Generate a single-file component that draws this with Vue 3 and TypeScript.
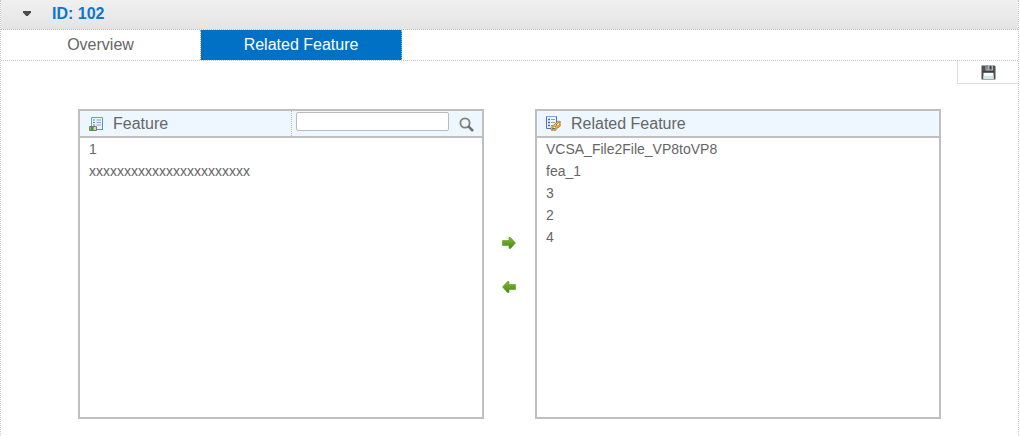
<script setup lang="ts">
import { ref } from 'vue'

const open = ref(true)
const tabs = ['Overview', 'Related Feature']
const active = ref('Related Feature')
const query = ref('')
const available = ref<string[]>(['1', 'xxxxxxxxxxxxxxxxxxxxxxx'])
const related = ref<string[]>(['VCSA_File2File_VP8toVP8', 'fea_1', '3', '2', '4'])
const selected = ref<string | null>(null)

function move(from: string[], to: string[]) {
  const index = from.findIndex((item) => item === selected.value)
  if (index >= 0) to.push(...from.splice(index, 1))
}
</script>

<template>
  <main class="page">
    <header class="title-bar">
      <button class="toggle" type="button" aria-label="Toggle details" :aria-expanded="open" @click="open = !open">
        <svg width="8" height="6" viewBox="0 0 8 6"><path d="M0 0h8v1.5L4.8 5H3.2L0 1.5z" fill="#4c4c4c" /></svg>
      </button>
      <h1>ID: 102</h1>
    </header>

    <nav class="tabs">
      <button
        v-for="tab in tabs"
        :key="tab"
        type="button"
        class="tab"
        :class="{ active: tab === active }"
        @click="active = tab"
      >{{ tab }}</button>
    </nav>

    <div class="toolbar">
      <button class="save" type="button" aria-label="Save">
        <svg width="15" height="15" viewBox="0 0 15 15">
          <path d="M0.5 0.5h13l1 1v13h-14z" fill="#505053" />
          <path d="M4.5 0.5h7.5v5H4.5z" fill="#b4b6bd" />
          <path d="M5 0.5h2v4H5z" fill="#85878e" />
          <path d="M8.5 1h2v3.5h-2z" fill="#3c3c40" />
          <path d="M2.5 7.5h10v6.5h-10z" fill="#f8fafa" />
          <path d="M2.5 11h10v3h-10z" fill="#d3e8e8" />
          <path d="M2 6.5h11v1H2z" fill="#2d2d30" />
        </svg>
      </button>
    </div>

    <div class="transfer">
      <section class="panel">
        <div class="panel-head">
          <svg class="icon" width="14" height="14" viewBox="0 0 14 14">
            <path d="M2.5 0.5h11v12h-11z" fill="#edf4ff" stroke="#6aa0e2" />
            <path d="M13.5 1v11.5H8" fill="none" stroke="#5a8fd0" />
            <path d="M4 3h2M4 5.5h2M4 8h2" stroke="#5382bd" stroke-width="1.2" />
            <path d="M7.5 3H12M7.5 5.5H12M7.5 8H12" stroke="#7fa4d4" />
            <path d="M0.5 9.5h7v4h-7z" fill="#d9d2c4" stroke="#807766" />
            <path d="M1.5 10h3v3h-3z" fill="#25a62e" />
          </svg>
          <h2>Feature</h2>
          <form class="search" @submit.prevent>
            <input v-model="query" type="text" aria-label="Search features">
            <button type="submit" aria-label="Search">
              <svg width="15" height="15" viewBox="0 0 15 15">
                <circle cx="6" cy="6" r="4.6" fill="none" stroke="#808080" stroke-width="1.8" />
                <path d="M9.2 9.2L14 14" stroke="#707070" stroke-width="2.6" />
              </svg>
            </button>
          </form>
        </div>
        <ul>
          <li v-for="item in available" :key="item" @click="selected = item">{{ item }}</li>
        </ul>
      </section>

      <div class="arrows">
        <button type="button" aria-label="Add to related features" @click="move(available, related)">
          <svg width="14" height="12" viewBox="0 0 14 12">
            <defs>
              <linearGradient id="leaf" x1="0" y1="0" x2="0" y2="1">
                <stop offset="0" stop-color="#83b83c" />
                <stop offset="1" stop-color="#438a0b" />
              </linearGradient>
            </defs>
            <path d="M0.5 3.5H7V0.5h1.5L13.5 6l-5 5.5H7V8.5H0.5z" fill="url(#leaf)" stroke="#5b961f" stroke-width="0.6" />
          </svg>
        </button>
        <button type="button" aria-label="Remove from related features" @click="move(related, available)">
          <svg width="14" height="12" viewBox="0 0 14 12">
            <path d="M13.5 3.5H7V0.5H5.5L0.5 6l5 5.5H7V8.5h6.5z" fill="url(#leaf)" stroke="#5b961f" stroke-width="0.6" />
          </svg>
        </button>
      </div>

      <section class="panel">
        <div class="panel-head">
          <svg class="icon" width="15" height="15" viewBox="0 0 15 15">
            <path d="M0.5 0.5h10v12h-10z" fill="#edf4ff" stroke="#4478bb" />
            <path d="M10.5 0.5H0.5" stroke="#7fa8df" />
            <path d="M2 3.5h2M2 6.5h2M2 9.5h2" stroke="#4a6d9e" stroke-width="1.3" />
            <path d="M5 3.5h4M5 6.5h4M5 9.5h2" stroke="#86a4ca" />
            <g fill="none" transform="rotate(-42 10 10)">
              <rect x="4.6" y="8.4" width="5.6" height="3.6" rx="1.8" stroke="#98631b" stroke-width="2" />
              <rect x="9.8" y="8.4" width="5.6" height="3.6" rx="1.8" stroke="#98631b" stroke-width="2" />
              <rect x="4.6" y="8.4" width="5.6" height="3.6" rx="1.8" stroke="#f3bd4b" />
              <rect x="9.8" y="8.4" width="5.6" height="3.6" rx="1.8" stroke="#f3bd4b" />
            </g>
          </svg>
          <h2>Related Feature</h2>
        </div>
        <ul>
          <li v-for="item in related" :key="item" @click="selected = item">{{ item }}</li>
        </ul>
      </section>
    </div>
  </main>
</template>

<style>
body {
  margin: 0;
  background: #fff;
}
</style>

<style scoped>
* {
  box-sizing: border-box;
}

.page {
  min-height: 100vh;
  margin-right: 1px;
  border: 0 dotted #c8c8c8;
  border-width: 0 1px;
  font-family: "Liberation Sans", Arial, sans-serif;
  font-size: 16px;
  color: #666;
}

button {
  display: flex;
  align-items: center;
  justify-content: center;
  padding: 0;
  border: 0;
  background: none;
  font: inherit;
  color: inherit;
  cursor: pointer;
}

svg {
  display: block;
  flex: none;
}

h1,
h2 {
  margin: 0;
  font-size: 16px;
  line-height: 26px;
}

.title-bar {
  display: flex;
  align-items: center;
  height: 30px;
  padding-bottom: 2px;
  border-bottom: 1px dotted #bbb;
  background: linear-gradient(#f0f0f0, #e4e4e4);
}

.toggle {
  width: 51px;
  height: 24px;
}

h1 {
  color: #0e76cb;
}

.tabs {
  display: flex;
  height: 31px;
  border-bottom: 1px dotted #c4c4c4;
}

.tab {
  width: 200px;
  border-right: 1px dotted #aaa;
}

.tab.active {
  width: 201px;
  background: #0071c5;
  color: #fff;
}

.toolbar {
  display: flex;
  justify-content: flex-end;
  margin-bottom: 25px;
}

.save {
  width: 61px;
  height: 23px;
  border: 0 solid #ddd;
  border-width: 0 0 1px 1px;
}

.transfer {
  display: flex;
  padding: 0 77px 16px;
}

.panel {
  flex: 1;
  min-width: 0;
  border: 2px solid #bfbfbf;
}

.panel-head {
  display: flex;
  height: 27px;
  padding-left: 9px;
  border-bottom: 2px solid #bfbfbf;
  background: #eef7ff;
}

.icon {
  align-self: center;
}

.panel-head h2 {
  padding-left: 10px;
  font-weight: 400;
}

.search {
  display: flex;
  align-items: flex-start;
  width: 191px;
  margin-left: auto;
  padding-left: 4px;
  border-left: 1px dotted #b5b5b5;
}

.search input {
  flex: 1;
  min-width: 0;
  height: 19px;
  margin-top: 1px;
  padding: 0 4px;
  border: 1px solid #bbb;
  border-radius: 2px;
  background: #fff;
  font: inherit;
  font-size: 14px;
  color: inherit;
}

.search button {
  width: 33px;
  height: 26px;
  padding-left: 2px;
}

ul {
  min-height: 279px;
  margin: 0;
  padding: 0 9px;
  list-style: none;
  font-size: 14px;
  line-height: 22px;
}

li {
  overflow-wrap: anywhere;
}

.arrows {
  display: flex;
  flex-direction: column;
  align-items: flex-start;
  justify-content: center;
  gap: 20px;
  width: 51px;
  padding: 2px 0 0 9px;
}

.arrows button {
  width: 32px;
  height: 24px;
}
</style>
